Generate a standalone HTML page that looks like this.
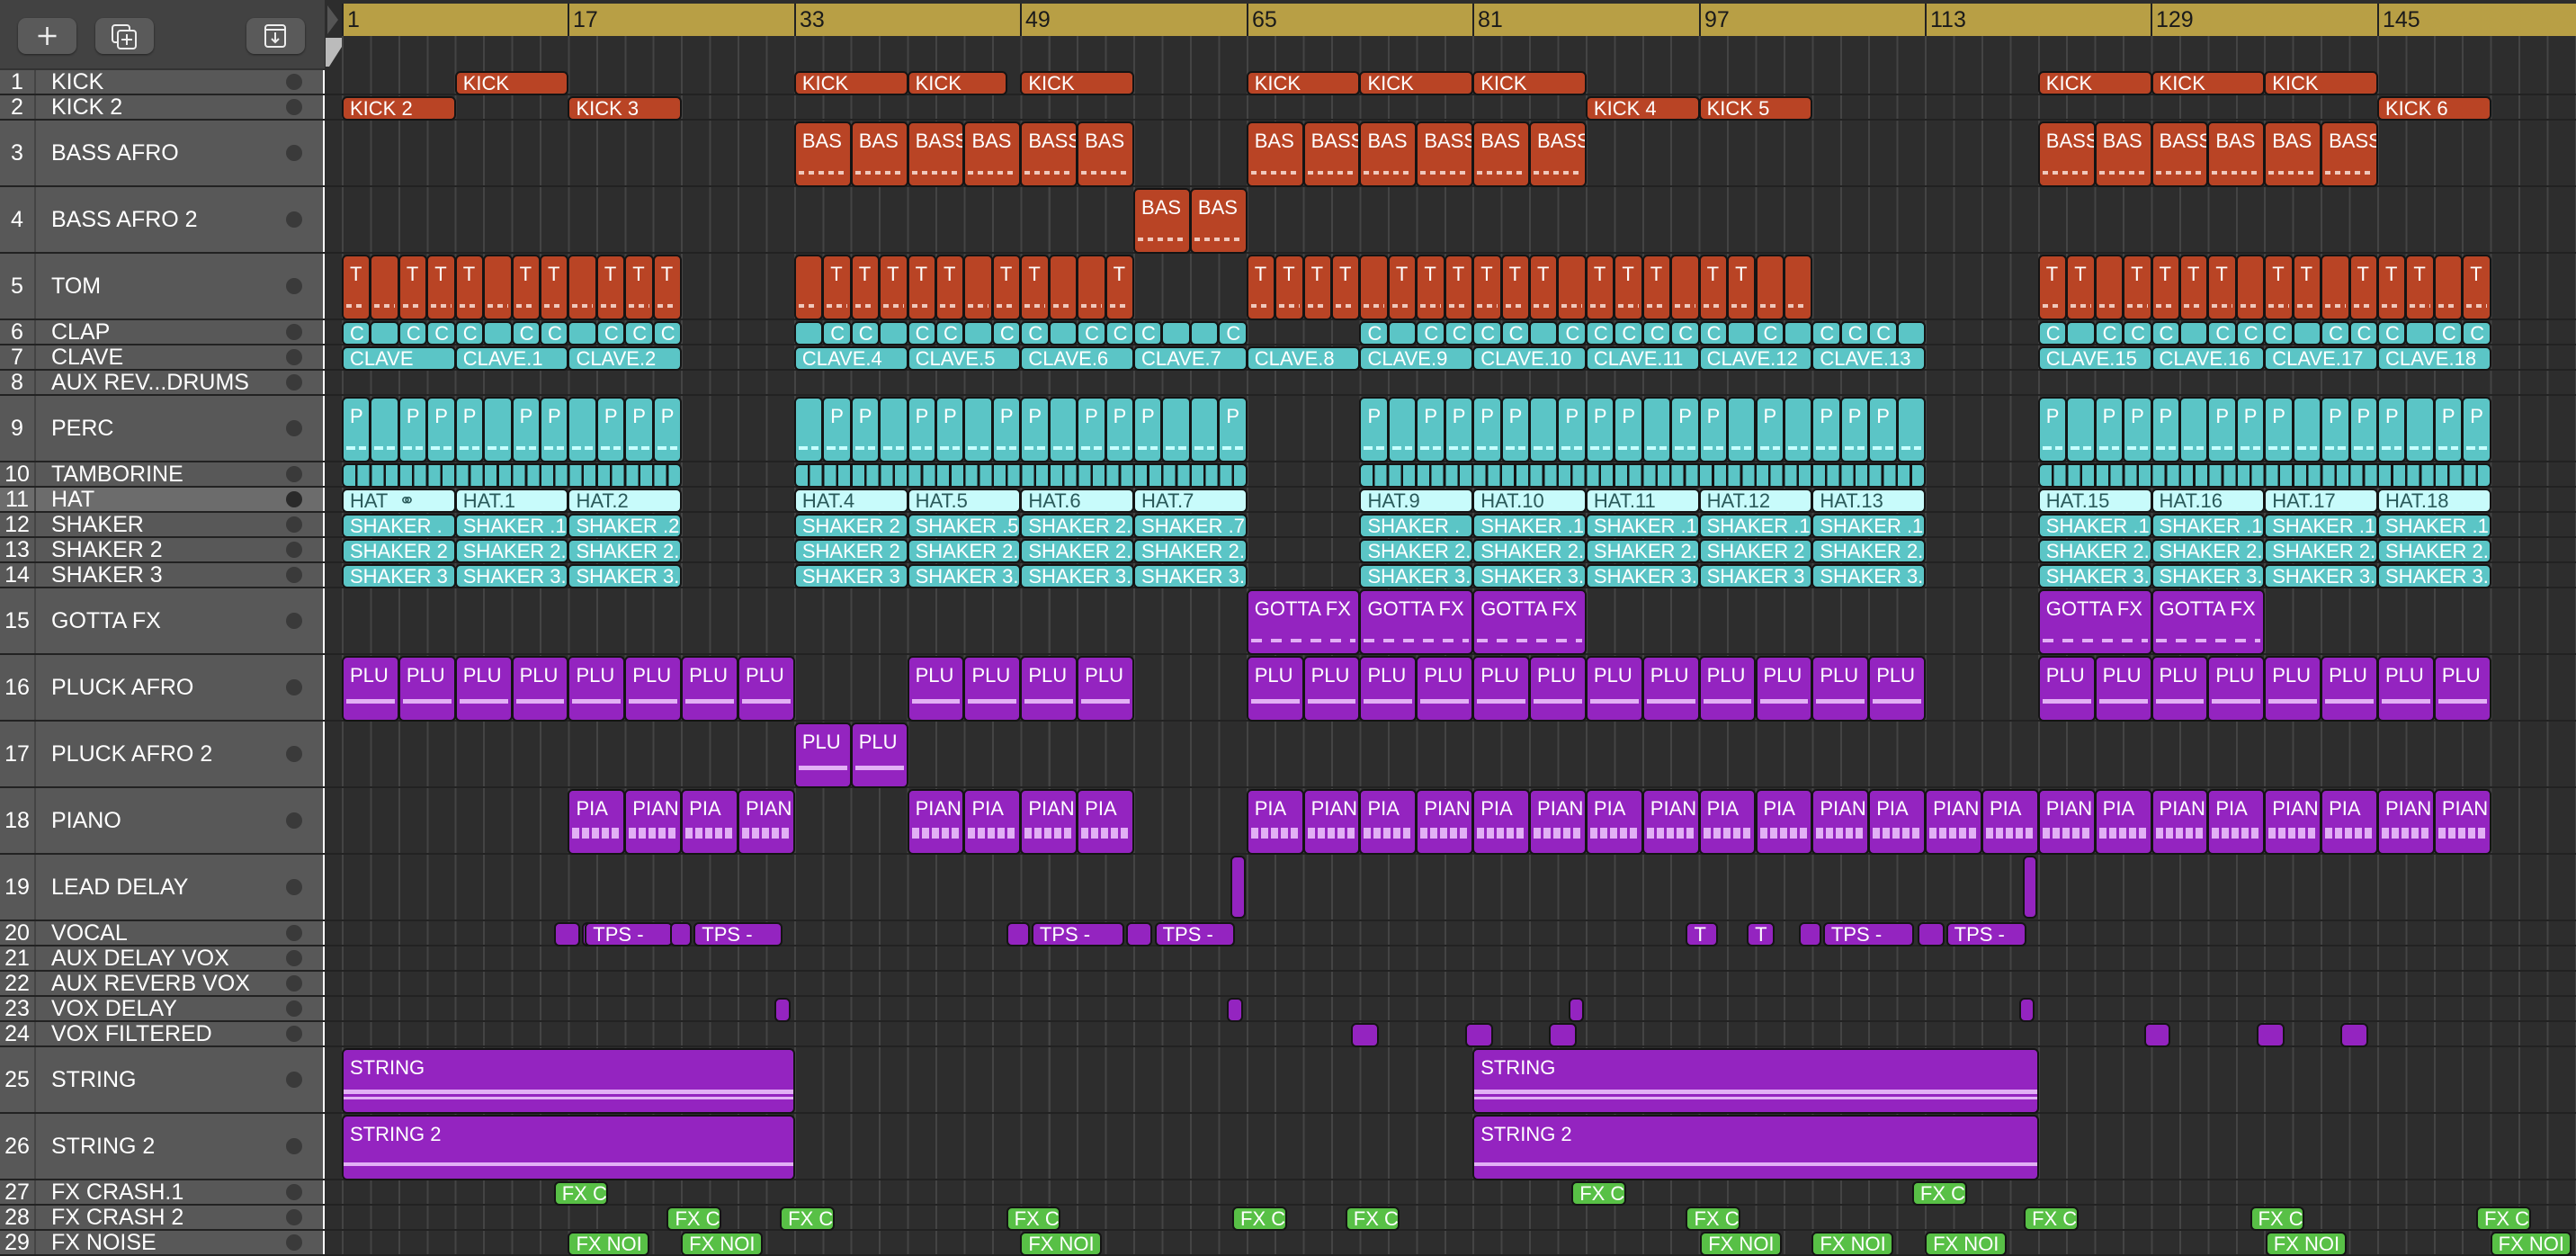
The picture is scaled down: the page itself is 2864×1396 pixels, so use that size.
<!DOCTYPE html>
<html><head><meta charset="utf-8">
<style>
*{margin:0;padding:0;box-sizing:border-box}
body{width:2864px;height:1394px;overflow:hidden;background:#2d2d2d;font-family:"Liberation Sans",sans-serif;position:relative}
#top{position:absolute;left:0;top:0;width:361px;height:78px;background:#424242;border-bottom:2px solid #333}
.btn{position:absolute;top:20px;height:40px;width:65px;background:#5a5a5a;border-radius:9px;box-shadow:0 1px 2px #222}
#grid{position:absolute;left:362px;top:40px;right:0;bottom:0;background:#2d2d2d}
#grid:before{content:"";position:absolute;left:18px;top:0;right:0;bottom:0;background:repeating-linear-gradient(90deg,#444 0 2px,transparent 2px 31.43px)}
#ruler{position:absolute;left:380px;top:4px;right:0;height:36px;background:#b89f45}
.bn{position:absolute;top:0;height:36px;border-left:2px solid #222;font-size:25px;color:#1a1a1a;padding-left:4px;line-height:36px}
.row{position:absolute;left:0;width:2864px;border-bottom:2px solid #222}
.hd{position:absolute;left:0;top:0;bottom:0;width:361px;background:#585858;color:#fff;font-size:25px;border-right:2px solid #fff}
.hd .n{position:absolute;left:0;width:40px;top:0;bottom:0;border-right:2px solid #444;text-align:center;display:flex;align-items:center;justify-content:center}
.hd .nm{position:absolute;left:57px;top:0;bottom:0;display:flex;align-items:center;white-space:nowrap}
.hd .d{position:absolute;left:318px;top:50%;margin-top:-9px;width:18px;height:18px;border-radius:50%;background:#3a3a3a}
.x{position:absolute;left:calc(380px + (var(--s) - 1)*15.715px);width:calc((var(--e) - var(--s))*15.715px + 1px);border:2px solid #141414;border-radius:6px;color:#fff;font-size:22px;font-style:normal;font-weight:normal;white-space:nowrap;overflow:hidden;padding-left:7px;line-height:23px}
.R{background:#b94425}.C{background:#5bc5c6}.H{background:#c8fbfb;color:#2a5a5a}.P{background:#9424c0}.G{background:#58c046}
.tl{padding-top:8px}
.x.tl:after{content:"";position:absolute;left:3px;right:3px;bottom:12px;height:4px;background:repeating-linear-gradient(90deg,#f0c8bc 0 6px,transparent 6px 11px)}
.C.tl:after{background:repeating-linear-gradient(90deg,#c8ffff 0 10px,transparent 10px 14px)}
.P.tl:after{background:repeating-linear-gradient(90deg,#e2b0f5 0 12px,transparent 12px 22px)}
.P.pl:after{background:#e2b0f5;bottom:18px;height:5px}
.P.pn:after{background:repeating-linear-gradient(90deg,#e2b0f5 0 8px,transparent 8px 11px);bottom:16px;height:12px}
.P.st:after{background:linear-gradient(#e2b0f5 0 5px,transparent 5px 8px,#e2b0f5 8px 11px);bottom:14px;height:11px;left:0;right:0}
.P.st2:after{background:#e2b0f5;bottom:14px;height:4px;left:0;right:0}
.tam{background:repeating-linear-gradient(90deg,#5bc5c6 0 13px,#141414 13px 15.715px)}
.r1{top:79px;height:27px}.r2{top:107px;height:27px}.r3{top:135px;height:73px}.r4{top:209px;height:73px}.r5{top:283px;height:73px}
.r6{top:357px;height:27px}.r7{top:385px;height:27px}.r9{top:441px;height:73px}.r10{top:515px;height:27px}.r11{top:543px;height:27px}
.r12{top:571px;height:27px}.r13{top:599px;height:27px}.r14{top:627px;height:27px}.r15{top:655px;height:73px}.r16{top:729px;height:73px}
.r17{top:803px;height:73px}.r18{top:877px;height:73px}.r19{top:951px;height:70px}.r20{top:1025px;height:27px}.r23{top:1109px;height:27px}
.r24{top:1137px;height:27px}.r25{top:1165px;height:73px}.r26{top:1239px;height:73px}.r27{top:1313px;height:27px}.r28{top:1341px;height:27px}.r29{top:1369px;height:27px}
</style></head><body>
<div id="grid"></div>
<div id="top">
<div class="btn" style="left:20px"><svg width="65" height="40"><path d="M32.5 10v20M22.5 20h20" stroke="#eee" stroke-width="2.5"/></svg></div>
<div class="btn" style="left:106px"><svg width="65" height="40"><rect x="19" y="8" width="19" height="19" rx="3" fill="none" stroke="#eee" stroke-width="2"/><rect x="25" y="14" width="20" height="20" rx="3" fill="#5a5a5a" stroke="#eee" stroke-width="2"/><path d="M35 18v12M29 24h12" stroke="#eee" stroke-width="2"/></svg></div>
<div class="btn" style="left:274px"><svg width="65" height="40"><rect x="21" y="8" width="22" height="24" rx="3" fill="none" stroke="#eee" stroke-width="2"/><path d="M21 13h22M32 16v11M28 23l4 4 4-4" stroke="#eee" stroke-width="2" fill="none"/></svg></div>
</div>
<div id="ruler">
<div class="bn" style="left:0">1</div><div class="bn" style="left:251px">17</div><div class="bn" style="left:503px">33</div><div class="bn" style="left:754px">49</div><div class="bn" style="left:1006px">65</div><div class="bn" style="left:1257px">81</div><div class="bn" style="left:1509px">97</div><div class="bn" style="left:1760px">113</div><div class="bn" style="left:2011px">129</div><div class="bn" style="left:2263px">145</div>
</div>
<svg style="position:absolute;left:362px;top:40px" width="20" height="36"><path d="M0 2h18v10L4 34H0z" fill="#bbb"/></svg>
<svg style="position:absolute;left:362px;top:4px" width="18" height="36"><path d="M2 2l12 16-12 16z" fill="#555"/></svg>

<div class="row" style="top:78px;height:28px"><div class="hd"><span class="n">1</span><span class="nm">KICK</span><span class="d"></span></div></div>
<div class="row" style="top:106px;height:28px"><div class="hd"><span class="n">2</span><span class="nm">KICK 2</span><span class="d"></span></div></div>
<div class="row" style="top:134px;height:74px"><div class="hd"><span class="n">3</span><span class="nm">BASS AFRO</span><span class="d"></span></div></div>
<div class="row" style="top:208px;height:74px"><div class="hd"><span class="n">4</span><span class="nm">BASS AFRO 2</span><span class="d"></span></div></div>
<div class="row" style="top:282px;height:74px"><div class="hd"><span class="n">5</span><span class="nm">TOM</span><span class="d"></span></div></div>
<div class="row" style="top:356px;height:28px"><div class="hd"><span class="n">6</span><span class="nm">CLAP</span><span class="d"></span></div></div>
<div class="row" style="top:384px;height:28px"><div class="hd"><span class="n">7</span><span class="nm">CLAVE</span><span class="d"></span></div></div>
<div class="row" style="top:412px;height:28px"><div class="hd"><span class="n">8</span><span class="nm">AUX REV...DRUMS</span><span class="d"></span></div></div>
<div class="row" style="top:440px;height:74px"><div class="hd"><span class="n">9</span><span class="nm">PERC</span><span class="d"></span></div></div>
<div class="row" style="top:514px;height:28px"><div class="hd"><span class="n">10</span><span class="nm">TAMBORINE</span><span class="d"></span></div></div>
<div class="row" style="top:542px;height:28px"><div class="hd" style="background:#6c6c6c"><span class="n">11</span><span class="nm">HAT</span><span class="d" style="background:#2a2a2a"></span></div></div>
<div class="row" style="top:570px;height:28px"><div class="hd"><span class="n">12</span><span class="nm">SHAKER</span><span class="d"></span></div></div>
<div class="row" style="top:598px;height:28px"><div class="hd"><span class="n">13</span><span class="nm">SHAKER 2</span><span class="d"></span></div></div>
<div class="row" style="top:626px;height:28px"><div class="hd"><span class="n">14</span><span class="nm">SHAKER 3</span><span class="d"></span></div></div>
<div class="row" style="top:654px;height:74px"><div class="hd"><span class="n">15</span><span class="nm">GOTTA FX</span><span class="d"></span></div></div>
<div class="row" style="top:728px;height:74px"><div class="hd"><span class="n">16</span><span class="nm">PLUCK AFRO</span><span class="d"></span></div></div>
<div class="row" style="top:802px;height:74px"><div class="hd"><span class="n">17</span><span class="nm">PLUCK AFRO 2</span><span class="d"></span></div></div>
<div class="row" style="top:876px;height:74px"><div class="hd"><span class="n">18</span><span class="nm">PIANO</span><span class="d"></span></div></div>
<div class="row" style="top:950px;height:74px"><div class="hd"><span class="n">19</span><span class="nm">LEAD DELAY</span><span class="d"></span></div></div>
<div class="row" style="top:1024px;height:28px"><div class="hd"><span class="n">20</span><span class="nm">VOCAL</span><span class="d"></span></div></div>
<div class="row" style="top:1052px;height:28px"><div class="hd"><span class="n">21</span><span class="nm">AUX DELAY VOX</span><span class="d"></span></div></div>
<div class="row" style="top:1080px;height:28px"><div class="hd"><span class="n">22</span><span class="nm">AUX REVERB VOX</span><span class="d"></span></div></div>
<div class="row" style="top:1108px;height:28px"><div class="hd"><span class="n">23</span><span class="nm">VOX DELAY</span><span class="d"></span></div></div>
<div class="row" style="top:1136px;height:28px"><div class="hd"><span class="n">24</span><span class="nm">VOX FILTERED</span><span class="d"></span></div></div>
<div class="row" style="top:1164px;height:74px"><div class="hd"><span class="n">25</span><span class="nm">STRING</span><span class="d"></span></div></div>
<div class="row" style="top:1238px;height:74px"><div class="hd"><span class="n">26</span><span class="nm">STRING 2</span><span class="d"></span></div></div>
<div class="row" style="top:1312px;height:28px"><div class="hd"><span class="n">27</span><span class="nm">FX CRASH.1</span><span class="d"></span></div></div>
<div class="row" style="top:1340px;height:28px"><div class="hd"><span class="n">28</span><span class="nm">FX CRASH 2</span><span class="d"></span></div></div>
<div class="row" style="top:1368px;height:28px"><div class="hd"><span class="n">29</span><span class="nm">FX NOISE</span><span class="d"></span></div></div>

<!-- R1 -->
<i class="x R r1" style="--s:9;--e:17">KICK</i><i class="x R r1" style="--s:33;--e:41">KICK</i><i class="x R r1" style="--s:41;--e:48">KICK</i><i class="x R r1" style="--s:49;--e:57">KICK</i><i class="x R r1" style="--s:65;--e:73">KICK</i><i class="x R r1" style="--s:73;--e:81">KICK</i><i class="x R r1" style="--s:81;--e:89">KICK</i><i class="x R r1" style="--s:121;--e:129">KICK</i><i class="x R r1" style="--s:129;--e:137">KICK</i><i class="x R r1" style="--s:137;--e:145">KICK</i>
<!-- R2 -->
<i class="x R r2" style="--s:1;--e:9">KICK 2</i><i class="x R r2" style="--s:17;--e:25">KICK 3</i><i class="x R r2" style="--s:89;--e:97">KICK 4</i><i class="x R r2" style="--s:97;--e:105">KICK 5</i><i class="x R r2" style="--s:145;--e:153">KICK 6</i>
<!-- R3 -->
<i class="x R r3 tl" style="--s:33;--e:37">BAS</i><i class="x R r3 tl" style="--s:37;--e:41">BAS</i><i class="x R r3 tl" style="--s:41;--e:45">BASS</i><i class="x R r3 tl" style="--s:45;--e:49">BAS</i><i class="x R r3 tl" style="--s:49;--e:53">BASS</i><i class="x R r3 tl" style="--s:53;--e:57">BAS</i>
<i class="x R r3 tl" style="--s:65;--e:69">BAS</i><i class="x R r3 tl" style="--s:69;--e:73">BASS</i><i class="x R r3 tl" style="--s:73;--e:77">BAS</i><i class="x R r3 tl" style="--s:77;--e:81">BASS</i><i class="x R r3 tl" style="--s:81;--e:85">BAS</i><i class="x R r3 tl" style="--s:85;--e:89">BASS</i>
<i class="x R r3 tl" style="--s:121;--e:125">BASS</i><i class="x R r3 tl" style="--s:125;--e:129">BAS</i><i class="x R r3 tl" style="--s:129;--e:133">BASS</i><i class="x R r3 tl" style="--s:133;--e:137">BAS</i><i class="x R r3 tl" style="--s:137;--e:141">BAS</i><i class="x R r3 tl" style="--s:141;--e:145">BASS</i>
<!-- R4 -->
<i class="x R r4 tl" style="--s:57;--e:61">BAS</i><i class="x R r4 tl" style="--s:61;--e:65">BAS</i>
<!-- R5 TOM -->
<i class="x R r5 tl" style="--s:1;--e:3">T</i><i class="x R r5 tl" style="--s:3;--e:5"></i><i class="x R r5 tl" style="--s:5;--e:7">T</i><i class="x R r5 tl" style="--s:7;--e:9">T</i><i class="x R r5 tl" style="--s:9;--e:11">T</i><i class="x R r5 tl" style="--s:11;--e:13"></i><i class="x R r5 tl" style="--s:13;--e:15">T</i><i class="x R r5 tl" style="--s:15;--e:17">T</i><i class="x R r5 tl" style="--s:17;--e:19"></i><i class="x R r5 tl" style="--s:19;--e:21">T</i><i class="x R r5 tl" style="--s:21;--e:23">T</i><i class="x R r5 tl" style="--s:23;--e:25">T</i>
<i class="x R r5 tl" style="--s:33;--e:35"></i><i class="x R r5 tl" style="--s:35;--e:37">T</i><i class="x R r5 tl" style="--s:37;--e:39">T</i><i class="x R r5 tl" style="--s:39;--e:41">T</i><i class="x R r5 tl" style="--s:41;--e:43">T</i><i class="x R r5 tl" style="--s:43;--e:45">T</i><i class="x R r5 tl" style="--s:45;--e:47"></i><i class="x R r5 tl" style="--s:47;--e:49">T</i><i class="x R r5 tl" style="--s:49;--e:51">T</i><i class="x R r5 tl" style="--s:51;--e:53"></i><i class="x R r5 tl" style="--s:53;--e:55"></i><i class="x R r5 tl" style="--s:55;--e:57">T</i>
<i class="x R r5 tl" style="--s:65;--e:67">T</i><i class="x R r5 tl" style="--s:67;--e:69">T</i><i class="x R r5 tl" style="--s:69;--e:71">T</i><i class="x R r5 tl" style="--s:71;--e:73">T</i><i class="x R r5 tl" style="--s:73;--e:75"></i><i class="x R r5 tl" style="--s:75;--e:77">T</i><i class="x R r5 tl" style="--s:77;--e:79">T</i><i class="x R r5 tl" style="--s:79;--e:81">T</i><i class="x R r5 tl" style="--s:81;--e:83">T</i><i class="x R r5 tl" style="--s:83;--e:85">T</i><i class="x R r5 tl" style="--s:85;--e:87">T</i><i class="x R r5 tl" style="--s:87;--e:89"></i><i class="x R r5 tl" style="--s:89;--e:91">T</i><i class="x R r5 tl" style="--s:91;--e:93">T</i><i class="x R r5 tl" style="--s:93;--e:95">T</i><i class="x R r5 tl" style="--s:95;--e:97"></i><i class="x R r5 tl" style="--s:97;--e:99">T</i><i class="x R r5 tl" style="--s:99;--e:101">T</i><i class="x R r5 tl" style="--s:101;--e:103"></i><i class="x R r5 tl" style="--s:103;--e:105"></i>
<i class="x R r5 tl" style="--s:121;--e:123">T</i><i class="x R r5 tl" style="--s:123;--e:125">T</i><i class="x R r5 tl" style="--s:125;--e:127"></i><i class="x R r5 tl" style="--s:127;--e:129">T</i><i class="x R r5 tl" style="--s:129;--e:131">T</i><i class="x R r5 tl" style="--s:131;--e:133">T</i><i class="x R r5 tl" style="--s:133;--e:135">T</i><i class="x R r5 tl" style="--s:135;--e:137"></i><i class="x R r5 tl" style="--s:137;--e:139">T</i><i class="x R r5 tl" style="--s:139;--e:141">T</i><i class="x R r5 tl" style="--s:141;--e:143"></i><i class="x R r5 tl" style="--s:143;--e:145">T</i><i class="x R r5 tl" style="--s:145;--e:147">T</i><i class="x R r5 tl" style="--s:147;--e:149">T</i><i class="x R r5 tl" style="--s:149;--e:151"></i><i class="x R r5 tl" style="--s:151;--e:153">T</i>
<!-- R6 CLAP -->
<i class="x C r6" style="--s:1;--e:3">C</i><i class="x C r6" style="--s:3;--e:5"></i><i class="x C r6" style="--s:5;--e:7">C</i><i class="x C r6" style="--s:7;--e:9">C</i><i class="x C r6" style="--s:9;--e:11">C</i><i class="x C r6" style="--s:11;--e:13"></i><i class="x C r6" style="--s:13;--e:15">C</i><i class="x C r6" style="--s:15;--e:17">C</i><i class="x C r6" style="--s:17;--e:19"></i><i class="x C r6" style="--s:19;--e:21">C</i><i class="x C r6" style="--s:21;--e:23">C</i><i class="x C r6" style="--s:23;--e:25">C</i>
<i class="x C r6" style="--s:33;--e:35"></i><i class="x C r6" style="--s:35;--e:37">C</i><i class="x C r6" style="--s:37;--e:39">C</i><i class="x C r6" style="--s:39;--e:41"></i><i class="x C r6" style="--s:41;--e:43">C</i><i class="x C r6" style="--s:43;--e:45">C</i><i class="x C r6" style="--s:45;--e:47"></i><i class="x C r6" style="--s:47;--e:49">C</i><i class="x C r6" style="--s:49;--e:51">C</i><i class="x C r6" style="--s:51;--e:53"></i><i class="x C r6" style="--s:53;--e:55">C</i><i class="x C r6" style="--s:55;--e:57">C</i><i class="x C r6" style="--s:57;--e:59">C</i><i class="x C r6" style="--s:59;--e:61"></i><i class="x C r6" style="--s:61;--e:63"></i><i class="x C r6" style="--s:63;--e:65">C</i>
<i class="x C r6" style="--s:73;--e:75">C</i><i class="x C r6" style="--s:75;--e:77"></i><i class="x C r6" style="--s:77;--e:79">C</i><i class="x C r6" style="--s:79;--e:81">C</i><i class="x C r6" style="--s:81;--e:83">C</i><i class="x C r6" style="--s:83;--e:85">C</i><i class="x C r6" style="--s:85;--e:87"></i><i class="x C r6" style="--s:87;--e:89">C</i><i class="x C r6" style="--s:89;--e:91">C</i><i class="x C r6" style="--s:91;--e:93">C</i><i class="x C r6" style="--s:93;--e:95">C</i><i class="x C r6" style="--s:95;--e:97">C</i><i class="x C r6" style="--s:97;--e:99">C</i><i class="x C r6" style="--s:99;--e:101"></i><i class="x C r6" style="--s:101;--e:103">C</i><i class="x C r6" style="--s:103;--e:105"></i><i class="x C r6" style="--s:105;--e:107">C</i><i class="x C r6" style="--s:107;--e:109">C</i><i class="x C r6" style="--s:109;--e:111">C</i><i class="x C r6" style="--s:111;--e:113"></i>
<i class="x C r6" style="--s:121;--e:123">C</i><i class="x C r6" style="--s:123;--e:125"></i><i class="x C r6" style="--s:125;--e:127">C</i><i class="x C r6" style="--s:127;--e:129">C</i><i class="x C r6" style="--s:129;--e:131">C</i><i class="x C r6" style="--s:131;--e:133"></i><i class="x C r6" style="--s:133;--e:135">C</i><i class="x C r6" style="--s:135;--e:137">C</i><i class="x C r6" style="--s:137;--e:139">C</i><i class="x C r6" style="--s:139;--e:141"></i><i class="x C r6" style="--s:141;--e:143">C</i><i class="x C r6" style="--s:143;--e:145">C</i><i class="x C r6" style="--s:145;--e:147">C</i><i class="x C r6" style="--s:147;--e:149"></i><i class="x C r6" style="--s:149;--e:151">C</i><i class="x C r6" style="--s:151;--e:153">C</i>
<!-- R7 CLAVE -->
<i class="x C r7" style="--s:1;--e:9">CLAVE</i><i class="x C r7" style="--s:9;--e:17">CLAVE.1</i><i class="x C r7" style="--s:17;--e:25">CLAVE.2</i><i class="x C r7" style="--s:33;--e:41">CLAVE.4</i><i class="x C r7" style="--s:41;--e:49">CLAVE.5</i><i class="x C r7" style="--s:49;--e:57">CLAVE.6</i><i class="x C r7" style="--s:57;--e:65">CLAVE.7</i><i class="x C r7" style="--s:65;--e:73">CLAVE.8</i><i class="x C r7" style="--s:73;--e:81">CLAVE.9</i><i class="x C r7" style="--s:81;--e:89">CLAVE.10</i><i class="x C r7" style="--s:89;--e:97">CLAVE.11</i><i class="x C r7" style="--s:97;--e:105">CLAVE.12</i><i class="x C r7" style="--s:105;--e:113">CLAVE.13</i><i class="x C r7" style="--s:121;--e:129">CLAVE.15</i><i class="x C r7" style="--s:129;--e:137">CLAVE.16</i><i class="x C r7" style="--s:137;--e:145">CLAVE.17</i><i class="x C r7" style="--s:145;--e:153">CLAVE.18</i>
<!-- R9 PERC -->
<i class="x C r9 tl" style="--s:1;--e:3">P</i><i class="x C r9 tl" style="--s:3;--e:5"></i><i class="x C r9 tl" style="--s:5;--e:7">P</i><i class="x C r9 tl" style="--s:7;--e:9">P</i><i class="x C r9 tl" style="--s:9;--e:11">P</i><i class="x C r9 tl" style="--s:11;--e:13"></i><i class="x C r9 tl" style="--s:13;--e:15">P</i><i class="x C r9 tl" style="--s:15;--e:17">P</i><i class="x C r9 tl" style="--s:17;--e:19"></i><i class="x C r9 tl" style="--s:19;--e:21">P</i><i class="x C r9 tl" style="--s:21;--e:23">P</i><i class="x C r9 tl" style="--s:23;--e:25">P</i>
<i class="x C r9 tl" style="--s:33;--e:35"></i><i class="x C r9 tl" style="--s:35;--e:37">P</i><i class="x C r9 tl" style="--s:37;--e:39">P</i><i class="x C r9 tl" style="--s:39;--e:41"></i><i class="x C r9 tl" style="--s:41;--e:43">P</i><i class="x C r9 tl" style="--s:43;--e:45">P</i><i class="x C r9 tl" style="--s:45;--e:47"></i><i class="x C r9 tl" style="--s:47;--e:49">P</i><i class="x C r9 tl" style="--s:49;--e:51">P</i><i class="x C r9 tl" style="--s:51;--e:53"></i><i class="x C r9 tl" style="--s:53;--e:55">P</i><i class="x C r9 tl" style="--s:55;--e:57">P</i><i class="x C r9 tl" style="--s:57;--e:59">P</i><i class="x C r9 tl" style="--s:59;--e:61"></i><i class="x C r9 tl" style="--s:61;--e:63"></i><i class="x C r9 tl" style="--s:63;--e:65">P</i>
<i class="x C r9 tl" style="--s:73;--e:75">P</i><i class="x C r9 tl" style="--s:75;--e:77"></i><i class="x C r9 tl" style="--s:77;--e:79">P</i><i class="x C r9 tl" style="--s:79;--e:81">P</i><i class="x C r9 tl" style="--s:81;--e:83">P</i><i class="x C r9 tl" style="--s:83;--e:85">P</i><i class="x C r9 tl" style="--s:85;--e:87"></i><i class="x C r9 tl" style="--s:87;--e:89">P</i><i class="x C r9 tl" style="--s:89;--e:91">P</i><i class="x C r9 tl" style="--s:91;--e:93">P</i><i class="x C r9 tl" style="--s:93;--e:95"></i><i class="x C r9 tl" style="--s:95;--e:97">P</i><i class="x C r9 tl" style="--s:97;--e:99">P</i><i class="x C r9 tl" style="--s:99;--e:101"></i><i class="x C r9 tl" style="--s:101;--e:103">P</i><i class="x C r9 tl" style="--s:103;--e:105"></i><i class="x C r9 tl" style="--s:105;--e:107">P</i><i class="x C r9 tl" style="--s:107;--e:109">P</i><i class="x C r9 tl" style="--s:109;--e:111">P</i><i class="x C r9 tl" style="--s:111;--e:113"></i>
<i class="x C r9 tl" style="--s:121;--e:123">P</i><i class="x C r9 tl" style="--s:123;--e:125"></i><i class="x C r9 tl" style="--s:125;--e:127">P</i><i class="x C r9 tl" style="--s:127;--e:129">P</i><i class="x C r9 tl" style="--s:129;--e:131">P</i><i class="x C r9 tl" style="--s:131;--e:133"></i><i class="x C r9 tl" style="--s:133;--e:135">P</i><i class="x C r9 tl" style="--s:135;--e:137">P</i><i class="x C r9 tl" style="--s:137;--e:139">P</i><i class="x C r9 tl" style="--s:139;--e:141"></i><i class="x C r9 tl" style="--s:141;--e:143">P</i><i class="x C r9 tl" style="--s:143;--e:145">P</i><i class="x C r9 tl" style="--s:145;--e:147">P</i><i class="x C r9 tl" style="--s:147;--e:149"></i><i class="x C r9 tl" style="--s:149;--e:151">P</i><i class="x C r9 tl" style="--s:151;--e:153">P</i>
<!-- R10 TAMBORINE -->
<i class="x tam r10" style="--s:1;--e:25"></i><i class="x tam r10" style="--s:33;--e:65"></i><i class="x tam r10" style="--s:73;--e:113"></i><i class="x tam r10" style="--s:121;--e:153"></i>
<!-- R11 HAT -->
<i class="x H r11" style="--s:1;--e:9">HAT &nbsp;⚭</i><i class="x H r11" style="--s:9;--e:17">HAT.1</i><i class="x H r11" style="--s:17;--e:25">HAT.2</i><i class="x H r11" style="--s:33;--e:41">HAT.4</i><i class="x H r11" style="--s:41;--e:49">HAT.5</i><i class="x H r11" style="--s:49;--e:57">HAT.6</i><i class="x H r11" style="--s:57;--e:65">HAT.7</i><i class="x H r11" style="--s:73;--e:81">HAT.9</i><i class="x H r11" style="--s:81;--e:89">HAT.10</i><i class="x H r11" style="--s:89;--e:97">HAT.11</i><i class="x H r11" style="--s:97;--e:105">HAT.12</i><i class="x H r11" style="--s:105;--e:113">HAT.13</i><i class="x H r11" style="--s:121;--e:129">HAT.15</i><i class="x H r11" style="--s:129;--e:137">HAT.16</i><i class="x H r11" style="--s:137;--e:145">HAT.17</i><i class="x H r11" style="--s:145;--e:153">HAT.18</i>
<!-- R12 -->
<i class="x C r12" style="--s:1;--e:9">SHAKER .</i><i class="x C r12" style="--s:9;--e:17">SHAKER .1</i><i class="x C r12" style="--s:17;--e:25">SHAKER .2</i><i class="x C r12" style="--s:33;--e:41">SHAKER 2</i><i class="x C r12" style="--s:41;--e:49">SHAKER .5</i><i class="x C r12" style="--s:49;--e:57">SHAKER 2.</i><i class="x C r12" style="--s:57;--e:65">SHAKER .7</i><i class="x C r12" style="--s:73;--e:81">SHAKER .</i><i class="x C r12" style="--s:81;--e:89">SHAKER .1</i><i class="x C r12" style="--s:89;--e:97">SHAKER .1</i><i class="x C r12" style="--s:97;--e:105">SHAKER .1</i><i class="x C r12" style="--s:105;--e:113">SHAKER .1</i><i class="x C r12" style="--s:121;--e:129">SHAKER .1</i><i class="x C r12" style="--s:129;--e:137">SHAKER .1</i><i class="x C r12" style="--s:137;--e:145">SHAKER .1</i><i class="x C r12" style="--s:145;--e:153">SHAKER .1</i>
<!-- R13 -->
<i class="x C r13" style="--s:1;--e:9">SHAKER 2</i><i class="x C r13" style="--s:9;--e:17">SHAKER 2.</i><i class="x C r13" style="--s:17;--e:25">SHAKER 2.</i><i class="x C r13" style="--s:33;--e:41">SHAKER 2</i><i class="x C r13" style="--s:41;--e:49">SHAKER 2.</i><i class="x C r13" style="--s:49;--e:57">SHAKER 2.</i><i class="x C r13" style="--s:57;--e:65">SHAKER 2.</i><i class="x C r13" style="--s:73;--e:81">SHAKER 2.</i><i class="x C r13" style="--s:81;--e:89">SHAKER 2.</i><i class="x C r13" style="--s:89;--e:97">SHAKER 2.</i><i class="x C r13" style="--s:97;--e:105">SHAKER 2</i><i class="x C r13" style="--s:105;--e:113">SHAKER 2.</i><i class="x C r13" style="--s:121;--e:129">SHAKER 2.</i><i class="x C r13" style="--s:129;--e:137">SHAKER 2.</i><i class="x C r13" style="--s:137;--e:145">SHAKER 2.</i><i class="x C r13" style="--s:145;--e:153">SHAKER 2.</i>
<!-- R14 -->
<i class="x C r14" style="--s:1;--e:9">SHAKER 3</i><i class="x C r14" style="--s:9;--e:17">SHAKER 3.</i><i class="x C r14" style="--s:17;--e:25">SHAKER 3.</i><i class="x C r14" style="--s:33;--e:41">SHAKER 3</i><i class="x C r14" style="--s:41;--e:49">SHAKER 3.</i><i class="x C r14" style="--s:49;--e:57">SHAKER 3.</i><i class="x C r14" style="--s:57;--e:65">SHAKER 3.</i><i class="x C r14" style="--s:73;--e:81">SHAKER 3.</i><i class="x C r14" style="--s:81;--e:89">SHAKER 3.</i><i class="x C r14" style="--s:89;--e:97">SHAKER 3.</i><i class="x C r14" style="--s:97;--e:105">SHAKER 3</i><i class="x C r14" style="--s:105;--e:113">SHAKER 3.</i><i class="x C r14" style="--s:121;--e:129">SHAKER 3.</i><i class="x C r14" style="--s:129;--e:137">SHAKER 3.</i><i class="x C r14" style="--s:137;--e:145">SHAKER 3.</i><i class="x C r14" style="--s:145;--e:153">SHAKER 3.</i>
<!-- R15 -->
<i class="x P r15 tl" style="--s:65;--e:73">GOTTA FX</i><i class="x P r15 tl" style="--s:73;--e:81">GOTTA FX</i><i class="x P r15 tl" style="--s:81;--e:89">GOTTA FX</i><i class="x P r15 tl" style="--s:121;--e:129">GOTTA FX</i><i class="x P r15 tl" style="--s:129;--e:137">GOTTA FX</i>
<!-- R16 PLUCK -->
<i class="x P r16 tl pl" style="--s:1;--e:5">PLU</i><i class="x P r16 tl pl" style="--s:5;--e:9">PLU</i><i class="x P r16 tl pl" style="--s:9;--e:13">PLU</i><i class="x P r16 tl pl" style="--s:13;--e:17">PLU</i><i class="x P r16 tl pl" style="--s:17;--e:21">PLU</i><i class="x P r16 tl pl" style="--s:21;--e:25">PLU</i><i class="x P r16 tl pl" style="--s:25;--e:29">PLU</i><i class="x P r16 tl pl" style="--s:29;--e:33">PLU</i>
<i class="x P r16 tl pl" style="--s:41;--e:45">PLU</i><i class="x P r16 tl pl" style="--s:45;--e:49">PLU</i><i class="x P r16 tl pl" style="--s:49;--e:53">PLU</i><i class="x P r16 tl pl" style="--s:53;--e:57">PLU</i>
<i class="x P r16 tl pl" style="--s:65;--e:69">PLU</i><i class="x P r16 tl pl" style="--s:69;--e:73">PLU</i><i class="x P r16 tl pl" style="--s:73;--e:77">PLU</i><i class="x P r16 tl pl" style="--s:77;--e:81">PLU</i><i class="x P r16 tl pl" style="--s:81;--e:85">PLU</i><i class="x P r16 tl pl" style="--s:85;--e:89">PLU</i><i class="x P r16 tl pl" style="--s:89;--e:93">PLU</i><i class="x P r16 tl pl" style="--s:93;--e:97">PLU</i><i class="x P r16 tl pl" style="--s:97;--e:101">PLU</i><i class="x P r16 tl pl" style="--s:101;--e:105">PLU</i><i class="x P r16 tl pl" style="--s:105;--e:109">PLU</i><i class="x P r16 tl pl" style="--s:109;--e:113">PLU</i>
<i class="x P r16 tl pl" style="--s:121;--e:125">PLU</i><i class="x P r16 tl pl" style="--s:125;--e:129">PLU</i><i class="x P r16 tl pl" style="--s:129;--e:133">PLU</i><i class="x P r16 tl pl" style="--s:133;--e:137">PLU</i><i class="x P r16 tl pl" style="--s:137;--e:141">PLU</i><i class="x P r16 tl pl" style="--s:141;--e:145">PLU</i><i class="x P r16 tl pl" style="--s:145;--e:149">PLU</i><i class="x P r16 tl pl" style="--s:149;--e:153">PLU</i>
<!-- R17 -->
<i class="x P r17 tl pl" style="--s:33;--e:37">PLU</i><i class="x P r17 tl pl" style="--s:37;--e:41">PLU</i>
<!-- R18 PIANO -->
<i class="x P r18 tl pn" style="--s:17;--e:21">PIA</i><i class="x P r18 tl pn" style="--s:21;--e:25">PIAN</i><i class="x P r18 tl pn" style="--s:25;--e:29">PIA</i><i class="x P r18 tl pn" style="--s:29;--e:33">PIAN</i>
<i class="x P r18 tl pn" style="--s:41;--e:45">PIAN</i><i class="x P r18 tl pn" style="--s:45;--e:49">PIA</i><i class="x P r18 tl pn" style="--s:49;--e:53">PIAN</i><i class="x P r18 tl pn" style="--s:53;--e:57">PIA</i>
<i class="x P r18 tl pn" style="--s:65;--e:69">PIA</i><i class="x P r18 tl pn" style="--s:69;--e:73">PIAN</i><i class="x P r18 tl pn" style="--s:73;--e:77">PIA</i><i class="x P r18 tl pn" style="--s:77;--e:81">PIAN</i><i class="x P r18 tl pn" style="--s:81;--e:85">PIA</i><i class="x P r18 tl pn" style="--s:85;--e:89">PIAN</i><i class="x P r18 tl pn" style="--s:89;--e:93">PIA</i><i class="x P r18 tl pn" style="--s:93;--e:97">PIAN</i><i class="x P r18 tl pn" style="--s:97;--e:101">PIA</i><i class="x P r18 tl pn" style="--s:101;--e:105">PIA</i><i class="x P r18 tl pn" style="--s:105;--e:109">PIAN</i><i class="x P r18 tl pn" style="--s:109;--e:113">PIA</i><i class="x P r18 tl pn" style="--s:113;--e:117">PIAN</i><i class="x P r18 tl pn" style="--s:117;--e:121">PIA</i><i class="x P r18 tl pn" style="--s:121;--e:125">PIAN</i><i class="x P r18 tl pn" style="--s:125;--e:129">PIA</i><i class="x P r18 tl pn" style="--s:129;--e:133">PIAN</i><i class="x P r18 tl pn" style="--s:133;--e:137">PIA</i><i class="x P r18 tl pn" style="--s:137;--e:141">PIAN</i><i class="x P r18 tl pn" style="--s:141;--e:145">PIA</i><i class="x P r18 tl pn" style="--s:145;--e:149">PIAN</i><i class="x P r18 tl pn" style="--s:149;--e:153">PIAN</i>
<!-- R19 -->
<i class="x P r19" style="--s:63.9;--e:64.9;padding:0"></i><i class="x P r19" style="--s:119.9;--e:120.9;padding:0"></i>
<!-- R20 VOCAL -->
<i class="x P r20" style="--s:16;--e:17.8"></i><i class="x P r20" style="--s:18;--e:24"></i><i class="x P r20" style="--s:18;--e:24;left:calc(380px + 17.2*15.715px);width:calc(6.2*15.715px)">TPS -</i><i class="x P r20" style="--s:24.2;--e:25.7"></i><i class="x P r20" style="--s:25.9;--e:32.1">TPS -</i>
<i class="x P r20" style="--s:48;--e:49.6"></i><i class="x P r20" style="--s:49.8;--e:56.3">TPS -</i><i class="x P r20" style="--s:56.5;--e:58.3"></i><i class="x P r20" style="--s:58.5;--e:64.1">TPS -</i>
<i class="x P r20" style="--s:96.1;--e:98.3">T</i><i class="x P r20" style="--s:100.4;--e:102.3">T</i><i class="x P r20" style="--s:104.1;--e:105.6"></i><i class="x P r20" style="--s:105.8;--e:112.2">TPS -</i><i class="x P r20" style="--s:112.5;--e:114.3"></i><i class="x P r20" style="--s:114.5;--e:120.1">TPS -</i>
<!-- R23 -->
<i class="x P r23" style="--s:31.6;--e:32.7;padding:0"></i><i class="x P r23" style="--s:63.6;--e:64.7;padding:0"></i><i class="x P r23" style="--s:87.8;--e:88.8;padding:0"></i><i class="x P r23" style="--s:119.7;--e:120.7;padding:0"></i>
<!-- R24 -->
<i class="x P r24" style="--s:72.4;--e:74.3;padding:0"></i><i class="x P r24" style="--s:80.5;--e:82.4;padding:0"></i><i class="x P r24" style="--s:86.4;--e:88.3;padding:0"></i><i class="x P r24" style="--s:128.5;--e:130.3;padding:0"></i><i class="x P r24" style="--s:136.5;--e:138.4;padding:0"></i><i class="x P r24" style="--s:142.4;--e:144.3;padding:0"></i>
<!-- R25/26 -->
<i class="x P r25 tl st" style="--s:1;--e:33">STRING</i><i class="x P r25 tl st" style="--s:81;--e:121">STRING</i>
<i class="x P r26 tl st2" style="--s:1;--e:33">STRING 2</i><i class="x P r26 tl st2" style="--s:81;--e:121">STRING 2</i>
<!-- R27-29 -->
<i class="x G r27" style="--s:16;--e:19.8">FX C</i><i class="x G r27" style="--s:88;--e:91.8">FX C</i><i class="x G r27" style="--s:112.1;--e:115.9">FX C</i>
<i class="x G r28" style="--s:24;--e:27.8">FX C</i><i class="x G r28" style="--s:32;--e:35.8">FX C</i><i class="x G r28" style="--s:48;--e:51.8">FX C</i><i class="x G r28" style="--s:64;--e:67.8">FX C</i><i class="x G r28" style="--s:72;--e:75.8">FX C</i><i class="x G r28" style="--s:96.1;--e:99.9">FX C</i><i class="x G r28" style="--s:120;--e:123.8">FX C</i><i class="x G r28" style="--s:136;--e:139.8">FX C</i><i class="x G r28" style="--s:152;--e:155.8">FX C</i>
<i class="x G r29" style="--s:17;--e:22.7">FX NOI</i><i class="x G r29" style="--s:25;--e:30.7">FX NOI</i><i class="x G r29" style="--s:49;--e:54.7">FX NOI</i><i class="x G r29" style="--s:97.1;--e:102.8">FX NOI</i><i class="x G r29" style="--s:105;--e:110.7">FX NOI</i><i class="x G r29" style="--s:113;--e:118.7">FX NOI</i><i class="x G r29" style="--s:137.1;--e:142.8">FX NOI</i><i class="x G r29" style="--s:153;--e:158.7">FX NOI</i>
</body></html>
